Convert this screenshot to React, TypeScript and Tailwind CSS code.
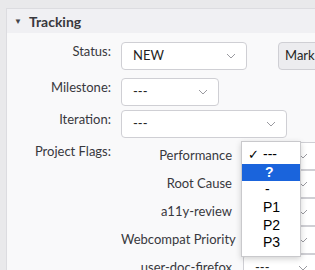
import React from 'react';

const font = { fontFamily: 'Lato, "Open Sans", sans-serif' };

function Chevron() {
  return (
    <svg width="10" height="6" viewBox="0 0 10 6" className="shrink-0">
      <path d="M1 1l4 4 4-4" fill="none" stroke="#9a9aa0" strokeWidth="1" />
    </svg>
  );
}

function Select({ value, className }: { value: string; className: string }) {
  return (
    <div
      className={`flex items-center justify-between shrink-0 bg-white border border-[#cfcfd4] rounded-[4px] pl-[11px] pr-[10px] text-[13px] text-[#1f1f23] ${className}`}
    >
      <span>{value}</span>
      <Chevron />
    </div>
  );
}

const flags = ['Performance', 'Root Cause', 'a11y-review', 'Webcompat Priority', 'user-doc-firefox'];
const options = ['---', '?', '-', 'P1', 'P2', 'P3'];

export default function App() {
  return (
    <div className="w-[315px] h-[270px] overflow-hidden bg-[#e9e9eb] pt-[8px] pl-[6px]" style={font}>
      <div className="bg-[#f9f9fa] border-l border-t border-[#dcdce0] h-full">
        {/* header */}
        <div className="h-[24px] bg-[#f0f0f3] flex items-center pl-[7px] gap-[7px]">
          <span className="text-[8px] text-[#45454a]">▼</span>
          <span className="text-[14px] font-bold text-[#38383d]">Tracking</span>
        </div>

        <div className="relative pt-[9px] text-[13px] text-[#38383d]">
          <div className="flex items-start">
            <div className="w-[104px] shrink-0 text-right leading-[18px]">Status:</div>
            <Select value="NEW" className="ml-[10px] w-[126px] h-[28px]" />
            <div className="ml-[31px] shrink-0 h-[28px] px-[6px] flex items-center bg-[#ececef] border border-[#cfcfd4] rounded-[4px] text-[#1f1f23] whitespace-nowrap">
              Mark as Duplicate
            </div>
          </div>
          <div className="flex items-start mt-[8px]">
            <div className="w-[104px] shrink-0 text-right leading-[18px]">Milestone:</div>
            <Select value="---" className="ml-[10px] w-[98px] h-[28px]" />
          </div>
          <div className="flex items-start mt-[4px]">
            <div className="w-[104px] shrink-0 text-right leading-[18px]">Iteration:</div>
            <Select value="---" className="ml-[10px] w-[166px] h-[28px]" />
          </div>
          <div className="flex items-start mt-[4px]">
            <div className="w-[104px] shrink-0 text-right leading-[18px]">Project Flags:</div>
            <div className="ml-[10px] flex flex-col">
              {flags.map((f, i) => (
                <div key={f} className="flex items-center h-[28px]">
                  <div className="w-[111px] shrink-0 text-right whitespace-nowrap">{f}</div>
                  <Select value={i < 4 ? '' : '---'} className="ml-[11px] w-[76px] h-[28px]" />
                </div>
              ))}
            </div>
          </div>

          {/* open select popup */}
          <div
            className="absolute left-[234px] top-[108px] w-[60px] bg-white border border-[#c9c9cc] shadow-[0_2px_6px_rgba(0,0,0,0.18)] py-[4px] text-[14px] text-black"
            style={{ fontFamily: '"Liberation Sans", Arial, sans-serif' }}
          >
            {options.map((o, i) => (
              <div
                key={o}
                className={`flex items-center h-[17.6px] ${i === 1 ? 'bg-[#1a64dc] text-white font-bold' : ''}`}
              >
                <span className="w-[21px] pl-[6px] text-[13px]">{i === 0 ? '✓' : ''}</span>
                <span className={i === 1 || i === 2 ? 'pl-[2px]' : ''}>{o}</span>
              </div>
            ))}
          </div>
        </div>
      </div>
    </div>
  );
}
